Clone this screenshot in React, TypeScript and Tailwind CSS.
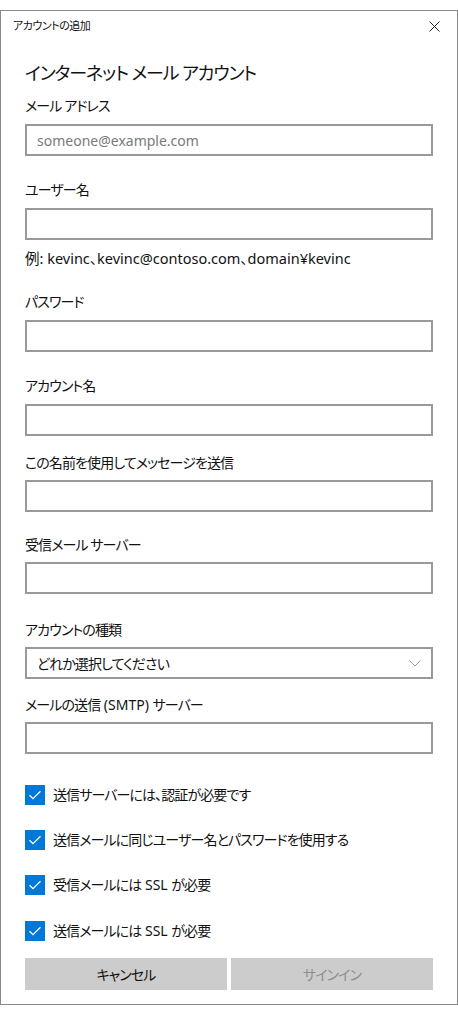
import { FC, ReactNode } from "react";

const font = "font-['Noto_Sans','Noto_Sans_CJK_JP',sans-serif] [font-feature-settings:'palt']";

const Label: FC<{ children: ReactNode; mt: string }> = ({ children, mt }) => (
  <div className={`${mt} h-[20px] text-[14px] leading-[20px] tracking-[-0.9px] text-[#111]`}>{children}</div>
);

const Input: FC<{ mt: string; placeholder?: string }> = ({ mt, placeholder }) => (
  <div className={`${mt} h-[32px] w-[408px] border-2 border-[#999999] bg-white flex items-center pl-[10px]`}>
    {placeholder && <span className="text-[14px] text-[#7a7a7a]">{placeholder}</span>}
  </div>
);

const Check: FC<{ children: ReactNode; mt: string }> = ({ children, mt }) => (
  <div className={`${mt} flex items-center h-[20px] gap-[8px]`}>
    <div className="w-[20px] h-[20px] bg-[#0078d7] flex items-center justify-center">
      <svg width="14" height="14" viewBox="0 0 14 14" fill="none">
        <path d="M1.5 7.2 L5 10.7 L12.5 3.2" stroke="white" strokeWidth="1.3" />
      </svg>
    </div>
    <span className="text-[14px] leading-[20px] tracking-[-0.9px] text-[#111]">{children}</span>
  </div>
);

// latin runs inside japanese labels keep normal spacing
const L: FC<{ children: ReactNode }> = ({ children }) => (
  <span className="tracking-normal">{children}</span>
);

export default function App() {
  return (
    <div className={`w-[458px] h-[1022px] bg-white pt-[10px] ${font}`}>
      <div className="h-[995px] border border-[#8a8a8a] flex flex-col">
        <div className="h-[30px] flex items-center justify-between pl-[12px] pr-[17px]">
          <span className="text-[11px] tracking-[-0.5px] text-[#111]">アカウントの追加</span>
          <svg width="11" height="11" viewBox="0 0 11 11">
            <path d="M0.5 0.5 L10.5 10.5 M10.5 0.5 L0.5 10.5" stroke="#222" strokeWidth="1" />
          </svg>
        </div>
        <div className="px-[24px] flex flex-col">
          <div className="mt-[18px] h-[28px] text-[18px] leading-[28px] tracking-[-1.1px] text-[#111]">
            インターネット メール アカウント
          </div>
          <Label mt="mt-[9px]">メール アドレス</Label>
          <Input mt="mt-[8px]" placeholder="someone@example.com" />
          <Label mt="mt-[24px]">ユーザー名</Label>
          <Input mt="mt-[8px]" />
          <div className="mt-[8px] h-[20px] text-[14.5px] leading-[20px] text-[#111]">
            例: kevinc、kevinc@contoso.com、domain¥kevinc
          </div>
          <Label mt="mt-[24px]">パスワード</Label>
          <Input mt="mt-[8px]" />
          <Label mt="mt-[24px]">アカウント名</Label>
          <Input mt="mt-[8px]" />
          <Label mt="mt-[17px]">この名前を使用してメッセージを送信</Label>
          <Input mt="mt-[7px]" />
          <Label mt="mt-[23px]">受信メール サーバー</Label>
          <Input mt="mt-[7px]" />
          <Label mt="mt-[26px]">アカウントの種類</Label>
          <div className="mt-[7px] h-[32px] w-[408px] border-2 border-[#999999] flex items-center justify-between pl-[10px] pr-[10px]">
            <span className="text-[14px] tracking-[-0.9px] text-[#111]">どれか選択してください</span>
            <svg width="12" height="7" viewBox="0 0 12 7">
              <path d="M0.5 0.5 L6 6 L11.5 0.5" stroke="#9a9a9a" strokeWidth="1" fill="none" />
            </svg>
          </div>
          <Label mt="mt-[16px]">
            メールの送信<L> (SMTP) </L>サーバー
          </Label>
          <Input mt="mt-[7px]" />
          <Check mt="mt-[31px]">送信サーバーには、認証が必要です</Check>
          <Check mt="mt-[25px]">送信メールに同じユーザー名とパスワードを使用する</Check>
          <Check mt="mt-[25px]">
            受信メールには<L> SSL </L>が必要
          </Check>
          <Check mt="mt-[26px]">
            送信メールには<L> SSL </L>が必要
          </Check>
          <div className="mt-[17px] flex gap-[4px] w-[408px]">
            <button className="flex-1 h-[32px] bg-[#cccccc] text-[14px] tracking-[-0.9px] text-[#111]">キャンセル</button>
            <button className="flex-1 h-[32px] bg-[#cccccc] text-[14px] tracking-[-0.9px] text-[#8e8e8e]">サインイン</button>
          </div>
        </div>
      </div>
    </div>
  );
}
